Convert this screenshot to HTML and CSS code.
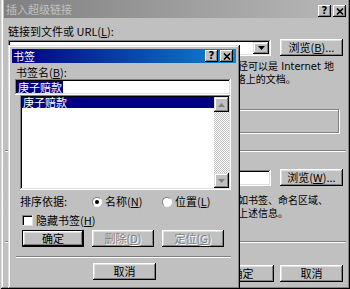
FILE: index.html
```html
<!DOCTYPE html>
<html lang="zh-CN">
<head>
  <meta charset="UTF-8">
  <title>插入超级链接 - 书签</title>
  <link rel="stylesheet" href="styles.css">
</head>
<body>
  <div class="desk">
    <!-- fenêtre principale (inactive) -->
    <div class="window main">
      <div class="titlebar inactive">
        <span class="caption">插入超级链接</span>
        <div class="cap-btns">
          <span class="cap-btn help">?</span>
          <span class="cap-btn"><svg width="8" height="7" viewBox="0 0 8 7"><path d="M1 .5l6 6M7 .5l-6 6" stroke="#000" stroke-width="1.6"/></svg></span>
        </div>
      </div>
      <div class="content">
        <div class="label">链接到文件或 URL(<u>L</u>):</div>
        <div class="field-row">
          <div class="combo sunken">
            <span class="combo-btn"><svg width="7" height="4" viewBox="0 0 7 4"><path d="M0 0h7L3.5 4z"/></svg></span>
          </div>
          <button class="btn">浏览(<u>B</u>)...</button>
        </div>
        <p class="hint hint-url">请在此输入或查找要链接到的文档的完整路径。该路径可以是 Internet 地<br>址(URL)、本地计算机硬盘上的文档，或者您公司网络上的文档。</p>
        <div class="path-frame"></div>
        <div class="etched wide"></div>
        <div class="label">文件中有名称的位置(可选)(<u>N</u>):</div>
        <div class="field-row">
          <div class="textbox sunken"></div>
          <button class="btn">浏览(<u>W</u>)...</button>
        </div>
        <p class="hint hint-loc">如果您希望跳转到该文件中的某一个特定的位置，比如书签、命名区域、<br>数据库对象或幻灯片编号等，请在此输入或者定位到上述信息。</p>
        <div class="etched wide"></div>
        <div class="actions">
          <button class="btn">确定</button>
          <button class="btn">取消</button>
        </div>
      </div>
    </div>

    <!-- boîte de dialogue Bookmark par-dessus -->
    <div class="window dialog">
      <div class="titlebar">
        <span class="caption">书签</span>
        <div class="cap-btns">
          <span class="cap-btn help">?</span>
          <span class="cap-btn"><svg width="8" height="7" viewBox="0 0 8 7"><path d="M1 .5l6 6M7 .5l-6 6" stroke="#000" stroke-width="1.6"/></svg></span>
        </div>
      </div>
      <div class="dlg-body">
        <div class="label">书签名(<u>B</u>):</div>
        <div class="textbox sunken name-box"><span class="sel">庚子赔款</span></div>
        <div class="listbox sunken">
          <div class="items">
            <div class="item selected">庚子赔款</div>
          </div>
          <div class="scrollbar">
            <span class="sb-btn"><svg width="7" height="4" viewBox="0 0 7 4"><path d="M0 4h7L3.5 0z"/></svg></span>
            <span class="sb-track"></span>
            <span class="sb-btn"><svg width="7" height="4" viewBox="0 0 7 4"><path d="M0 0h7L3.5 4z"/></svg></span>
          </div>
        </div>
        <div class="sort-row">
          <span>排序依据:</span>
          <span class="opt"><span class="radio checked"></span>名称(<u>N</u>)</span>
          <span class="opt"><span class="radio"></span>位置(<u>L</u>)</span>
        </div>
        <div class="check-row"><span class="checkbox"></span>隐藏书签(<u>H</u>)</div>
        <div class="dlg-btns">
          <button class="btn default">确定</button>
          <button class="btn" disabled>删除(<u>D</u>)</button>
          <button class="btn" disabled>定位(<u>G</u>)</button>
        </div>
        <div class="etched sep"></div>
        <div class="dlg-cancel"><button class="btn">取消</button></div>
      </div>
    </div>
  </div>
</body>
</html>
```

FILE: styles.css
```css
* { box-sizing: border-box; }

body {
  margin: 0;
  background: #c0c0c0;
  font-family: "Noto Sans CJK SC", "Noto Sans", sans-serif;
  font-size: 11px;
  line-height: 13px;
  color: #000;
}

u { text-decoration: underline; }

.desk {
  position: relative;
  width: 350px;
  height: 289px;
  overflow: hidden;
}

/* ---- fenêtres ---- */
.window {
  background: #c0c0c0;
  padding: 3px;
  box-shadow: inset -1px -1px #000, inset 1px 1px #dfdfdf, inset -2px -2px #808080, inset 2px 2px #fff;
}

.main {
  width: 349px;
  height: 292px;
  margin: -3px 0 0 1px;
}

.dialog {
  position: absolute;
  left: 8px;
  top: 45px;
  width: 232px;
  height: 244px;
  padding: 4px;
}

.titlebar {
  height: 18px;
  display: flex;
  align-items: center;
  justify-content: space-between;
  padding: 0 1px 0 2px;
  color: #fff;
  background: linear-gradient(90deg, #000080, #1084d0);
}

.titlebar.inactive {
  color: #c0c0c0;
  background: linear-gradient(90deg, #808080, #b8b8b8);
}

.main .cap-btns { margin-top: 4px; }

.dialog .titlebar {
  height: 14px;
  padding: 0 3px 0 1px;
}

.cap-btns { display: flex; gap: 2px; }

.cap-btn {
  width: 13px;
  height: 12px;
  display: flex;
  align-items: center;
  justify-content: center;
  background: #c0c0c0;
  color: #000;
  box-shadow: inset -1px -1px #000, inset 1px 1px #fff, inset -2px -2px #808080;
}

.cap-btn.help {
  font: bold 10px/1 "DejaVu Sans", sans-serif;
}

/* ---- contrôles ---- */
.btn {
  width: 63px;
  height: 17px;
  padding: 0;
  border: 0;
  font: inherit;
  color: #000;
  background: #c0c0c0;
  box-shadow: inset -1px -1px #000, inset 1px 1px #fff, inset -2px -2px #808080, inset 2px 2px #dfdfdf;
}

.btn.default {
  border: 1px solid #000;
}

.btn:disabled {
  color: #808080;
  text-shadow: 1px 1px #fff;
}

.sunken {
  background: #fff;
  box-shadow: inset -1px -1px #fff, inset 1px 1px #808080, inset -2px -2px #dfdfdf, inset 2px 2px #000;
}

.etched {
  height: 2px;
  border-top: 1px solid #808080;
  border-bottom: 1px solid #fff;
}

/* ---- contenu fenêtre principale ---- */
.content {
  padding: 7px 4px 0;
}

.field-row {
  display: flex;
  justify-content: space-between;
  align-items: flex-start;
  margin-top: 1px;
}

.combo {
  width: 263px;
  height: 16px;
  margin-top: 1px;
  padding: 2px;
  display: flex;
  justify-content: flex-end;
}

.combo-btn {
  width: 16px;
  height: 12px;
  display: flex;
  align-items: center;
  justify-content: center;
  background: #c0c0c0;
  box-shadow: inset -1px -1px #000, inset 1px 1px #dfdfdf, inset -2px -2px #808080, inset 2px 2px #fff;
}

.textbox {
  width: 263px;
  height: 16px;
  margin-top: 1px;
}

.hint {
  margin: 0;
  white-space: nowrap;
  font-family: "DejaVu Sans", "Noto Sans CJK SC", sans-serif;
  font-size: 10px;
}

.hint-url { margin-top: 4px; }

.path-frame {
  height: 24px;
  margin: 23px 4px 0 10px;
  border: 1px solid #808080;
  box-shadow: inset 1px 1px #fff, 1px 1px #fff;
}

.etched.wide { margin: 17px -3px 0; }

.etched.wide + .label { margin-top: 3px; }

.hint-loc { margin-top: 8px; }

.hint-loc + .etched.wide { margin-top: 21px; }

.actions {
  display: flex;
  justify-content: flex-end;
  gap: 6px;
  margin-top: 22px;
}

/* ---- boîte Bookmark ---- */
.dlg-body {
  padding: 3px 0 0 4px;
}

.dlg-body .label { line-height: 12px; }

.name-box {
  width: 216px;
  height: 16px;
  margin: 1px 0 0 -1px;
  padding: 2px 0 0 2px;
  line-height: 12px;
}

.sel {
  display: inline-block;
  background: #000080;
  color: #fff;
  padding: 0 1px;
}

.listbox {
  width: 211px;
  height: 95px;
  margin: 0 0 0 4px;
  padding: 2px;
  display: flex;
}

.items {
  flex: 1;
}

.item {
  line-height: 11px;
  padding-left: 1px;
}

.item.selected {
  background: #000080;
  color: #fff;
}

.scrollbar {
  width: 15px;
  display: flex;
  flex-direction: column;
}

.sb-btn {
  height: 15px;
  display: flex;
  align-items: center;
  justify-content: center;
  background: #c0c0c0;
  fill: #808080;
  box-shadow: inset -1px -1px #000, inset 1px 1px #dfdfdf, inset -2px -2px #808080, inset 2px 2px #fff;
}

.sb-track {
  flex: 1;
  background-image: repeating-conic-gradient(#fff 0 25%, #c0c0c0 0 50%);
  background-size: 2px 2px;
}

.sort-row {
  display: grid;
  grid-template-columns: 72px 70px auto;
  margin: 5px 0 0 4px;
}

.opt {
  display: flex;
  align-items: center;
}

.radio {
  width: 10px;
  height: 10px;
  margin-right: 3px;
  border-radius: 50%;
  background: #fff;
  border: 1px solid;
  border-color: #808080 #fff #fff #808080;
  display: flex;
  align-items: center;
  justify-content: center;
}

.radio.checked::after {
  content: "";
  width: 4px;
  height: 4px;
  border-radius: 50%;
  background: #000;
}

.check-row {
  display: flex;
  align-items: center;
  margin: 6px 0 0 6px;
}

.checkbox {
  width: 11px;
  height: 11px;
  margin-right: 3px;
  background: #fff;
  box-shadow: inset -1px -1px #dfdfdf, inset 1px 1px #808080, inset 2px 2px #000;
}

.dlg-btns {
  display: flex;
  gap: 8px;
  margin: 3px 0 0 6px;
}

.dlg-btns .btn { width: 62px; }

.etched.sep {
  width: 215px;
  margin-top: 9px;
}

.dlg-cancel {
  margin: 5px 0 0 77px;
}
```
